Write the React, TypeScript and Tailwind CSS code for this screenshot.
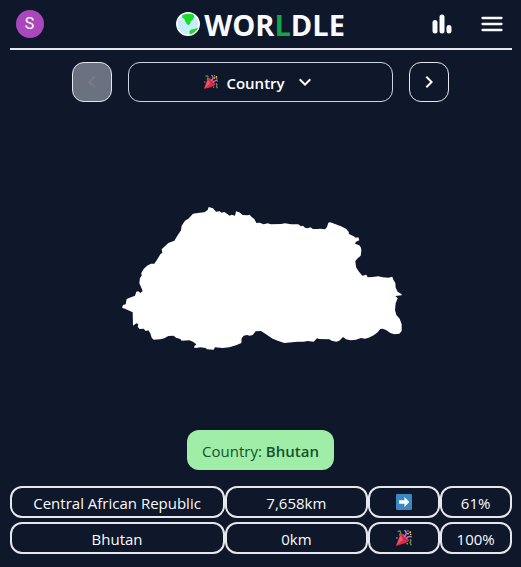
import React from "react";
import { MdChevronLeft, MdChevronRight, MdExpandMore } from "react-icons/md";

function GlobeIcon() {
  return (
    <svg viewBox="0 0 24 24" className="size-6" aria-hidden="true">
      <circle cx="12" cy="12" r="11.2" fill="#c8ecff" stroke="#fff" strokeWidth="1.5" />
      <path
        d="M6 3.6C8.5 1.7 14 1.2 17.6 2.6L18.2 5.2 16.4 8.2 14.6 9.4 14.4 11.6 12.2 13.2 10.4 11.6 9.4 9.8 8.4 7 6.4 5.8Z"
        fill="#1cdc28"
      />
      <path d="M22 15.8C20.8 19 17.8 21.8 14 22.2L13.2 19.8 15 17.6 18.4 17Z" fill="#1cdc28" />
    </svg>
  );
}

function PartyIcon({ className }: { className: string }) {
  return (
    <svg viewBox="0 0 36 36" className={className} role="img" aria-label="Celebration">
      <path d="M10 8C7 17 2 30 .4 34.4c-.3 1 .5 1.5 1.3 1.2C7 34 21 31 29 25c1-6-12-19-19-17Z" fill="#dd2e44" />
      <path d="M10 11c-2 8-6 17-9 24 6-6 12-11 15-15Z" fill="#ea596e" />
      <path d="M13 13c3 5 8 9 13 10" fill="none" stroke="#be1931" strokeWidth="2" />
      <path d="M19 14c5-4 6-8 1-13" fill="none" stroke="#9f80d6" strokeWidth="3.4" strokeLinecap="round" />
      <path d="M24 18c3-4 6-4 10-3" fill="none" stroke="#9f80d6" strokeWidth="3.4" strokeLinecap="round" />
      <path d="M5 3c6-3 7 3 3 8" fill="none" stroke="#5c913b" strokeWidth="3.2" strokeLinecap="round" />
      <path d="M32 22c3 1 0 4 0 6s1 4 2 5" fill="none" stroke="#5c913b" strokeWidth="3.4" strokeLinecap="round" />
      <circle cx="27" cy="8" r="2" fill="#ffcc4d" />
      <circle cx="32" cy="5" r="2.2" fill="#ffcc4d" />
      <circle cx="33" cy="10" r="1.6" fill="#ffcc4d" />
      <circle cx="27" cy="2" r="1.6" fill="#ffcc4d" />
      <circle cx="2" cy="18" r="2" fill="#9266cc" />
      <circle cx="25" cy="31" r="1.5" fill="#ffcc4d" />
    </svg>
  );
}

function ArrowIcon() {
  return (
    <svg viewBox="0 0 36 36" className="size-4" role="img" aria-label="East">
      <rect width="36" height="36" rx="3" fill="#3b88c3" />
      <path d="M19 7l11 11-11 11v-7H7v-8h12Z" fill="#fff" />
    </svg>
  );
}

function CountryShape() {
  return (
    <svg viewBox="0 0 900 510" className="w-[300px]" role="img" aria-label="Country outline">
      <path
        fill="#fff"
        d="M34 335 36 330 44 328 47 312 60 307 72 302 76 290 82 289 88 294 95 288 91 278 85 265 87 248 92 243 91 234 98 222 108 212 120 206 130 206 138 194 148 178 154 173 152 163 160 155 172 144 190 137 200 121 210 106 212 92 222 77 232 71 246 56 266 53 280 52 290 45 293 36 306 40 315 50 326 49 332 53 340 51 350 58 356 62 362 59 372 62 375 49 385 52 395 60 410 61 416 59 422 66 430 72 436 84 446 83 458 88 470 85 480 88 510 87 522 85 540 88 562 88 570 94 576 92 582 98 590 100 598 97 606 102 620 102 628 101 642 103 648 96 652 83 658 82 672 87 690 94 705 101 713 110 714 117 728 124 734 128 742 127 745 136 735 140 732 146 745 151 750 158 751 168 749 182 740 190 733 198 734 208 736 218 744 230 754 242 766 239 770 247 785 246 802 244 815 247 832 248 844 245 847 254 853 264 854 278 860 290 872 298 872 301 853 303 860 310 854 325 852 345 856 360 866 371 872 388 872 408 865 416 850 418 838 414 825 405 815 401 808 402 800 412 788 421 773 428 762 431 750 429 735 434 718 436 705 433 696 426 685 437 676 440 662 437 655 433 625 432 618 430 608 440 590 438 578 440 560 440 520 444 500 437 485 431 465 418 450 408 434 409 425 420 417 422 408 420 398 422 392 430 391 444 375 451 355 457 335 459 312 457 308 464 288 463 284 459 268 457 260 458 250 459 250 454 256 448 246 440 235 436 212 437 208 432 195 428 188 422 172 423 160 430 148 433 128 434 122 428 118 415 112 406 104 408 98 401 86 402 80 395 82 388 76 385 66 392 65 352 55 347 42 341 34 339Z"
      />
    </svg>
  );
}

const guesses = [
  { name: "Central African Republic", distance: "7,658km", icon: <ArrowIcon />, percent: "61%" },
  { name: "Bhutan", distance: "0km", icon: <PartyIcon className="size-4" />, percent: "100%" },
];

const cell =
  "flex h-8 items-center justify-center rounded-xl border-2 border-gray-200 p-0 pt-[2px]";

export default function App() {
  return (
    <div className="min-h-screen bg-slate-900 font-['Open_Sans','Noto_Sans',sans-serif] text-[15px] leading-6 text-slate-50">
      <div className="mx-auto flex w-full max-w-[502px] flex-col pb-3">
        <header className="grid h-[50px] grid-cols-[1fr_auto_1fr] items-center border-b-2 border-gray-200">
          <button
            aria-label="Account"
            className="ml-[6px] size-7 rounded-full bg-[#ab47bc] font-['Roboto',sans-serif] text-base leading-7 text-white"
          >
            S
          </button>
          <h1 className="flex items-center gap-1 text-[29px] leading-9 font-bold">
            <GlobeIcon />
            <span className="pt-[2px]">
              WOR<span className="text-[#16a34a]">L</span>DLE
            </span>
          </h1>
          <div className="flex items-center justify-end gap-[26px] pr-2">
            <button aria-label="Statistics">
              <svg viewBox="0 0 24 24" className="size-6" fill="currentColor" aria-hidden="true">
                <rect x="2.5" y="8" width="5" height="13.5" rx="2.5" />
                <rect x="9.5" y="2.5" width="5" height="19" rx="2.5" />
                <rect x="16.5" y="13" width="5" height="8.5" rx="2.5" />
              </svg>
            </button>
            <button aria-label="Menu">
              <svg viewBox="0 0 24 24" className="size-6" stroke="currentColor" strokeWidth="2.3" strokeLinecap="round" aria-hidden="true">
                <path d="M2.5 6h19M2.5 12h19M2.5 18h19" />
              </svg>
            </button>
          </div>
        </header>

        <nav className="mt-3 flex justify-center gap-4" aria-label="Rounds">
          <button
            disabled
            aria-label="Previous round"
            className="flex size-10 items-center justify-center rounded-xl border border-gray-200 bg-gray-500 text-[#7c7c7c]"
          >
            <MdChevronLeft className="size-6" />
          </button>
          <button className="flex h-10 w-[265px] items-center justify-center rounded-xl border border-slate-300 font-semibold text-white">
            <PartyIcon className="mr-2 size-[14px]" />
            <span className="pt-[2px]">Country</span>
            <MdExpandMore className="ml-2 size-6" />
          </button>
          <button
            aria-label="Next round"
            className="flex size-10 items-center justify-center rounded-xl border border-gray-200 text-white"
          >
            <MdChevronRight className="size-6" />
          </button>
        </nav>

        <main className="flex flex-col">
          <div className="flex h-[328px] items-center justify-center pt-[28px]">
            <CountryShape />
          </div>
          <p className="flex h-10 items-center self-center rounded-xl bg-[#a0eda8] px-[15px] pt-[2px] text-[#14532d]">
            <span>
              Country: <b className="font-semibold">Bhutan</b>
            </span>
          </p>
          <table className="mt-4 block" aria-label="Guesses">
            <tbody className="flex flex-col gap-1">
              {guesses.map((g) => (
                <tr key={g.name} className="grid grid-cols-[3fr_2fr_1fr_1fr]">
                  <td className={cell}>{g.name}</td>
                  <td className={cell}>{g.distance}</td>
                  <td className="flex h-8 items-center justify-center rounded-xl border-2 border-gray-200 p-0">
                    {g.icon}
                  </td>
                  <td className={cell}>{g.percent}</td>
                </tr>
              ))}
            </tbody>
          </table>
        </main>
      </div>
    </div>
  );
}
